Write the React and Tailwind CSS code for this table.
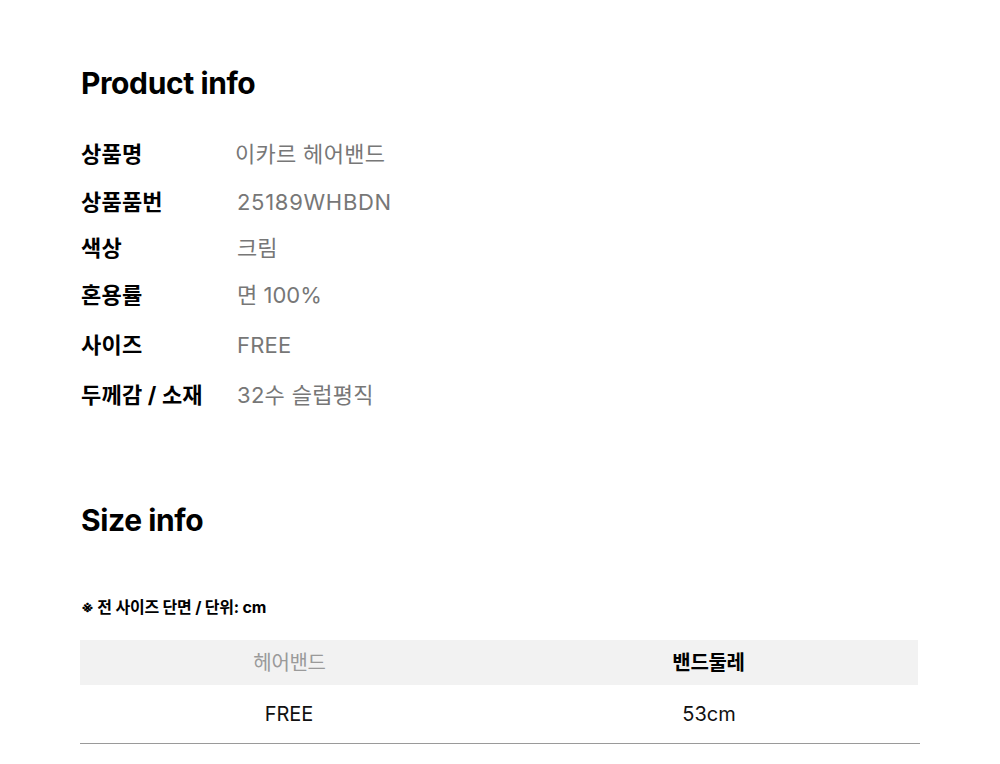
export default function App() {
  const font = { fontFamily: 'Inter, "Noto Sans CJK KR", sans-serif' };
  const rows = [
    ["상품명", "이카르 헤어밴드", "h-[48px]", "pl-0 tracking-[0.3px]"],
    ["상품품번", "25189WHBDN", "h-[48px]", "pl-[2px] tracking-[0.7px]"],
    ["색상", "크림", "h-[44px]", "pl-[2px]"],
    ["혼용률", "면 100%", "h-[50px]", "pl-[2px]"],
    ["사이즈", "FREE", "h-[50px]", "pl-[2px] tracking-[0.2px]"],
    ["두께감 / 소재", "32수 슬럽평직", "h-[50px]", "pl-[2px] tracking-[0.3px]"],
  ];
  return (
    <div className="w-[1000px] min-h-[764px] bg-white pl-[80px] pt-[65px]" style={font}>
      <h2 className="text-[30px] leading-[36px] font-bold text-black tracking-[-0.4px] pl-[1px]">Product info</h2>
      <div className="mt-[29px] flex flex-col">
        {rows.map(([k, v, h, pl]) => (
          <div key={k} className={`flex items-center ${h}`}>
            <div className="w-[155px] pl-[1px] text-[22px] font-bold text-black tracking-[0.2px]">{k}</div>
            <div className={`text-[22px] text-[#777777] ${pl}`}>{v}</div>
          </div>
        ))}
      </div>
      <h2 className="mt-[82px] text-[30px] leading-[36px] font-bold text-black tracking-[-0.4px] pl-[1px]">Size info</h2>
      <div className="mt-[59px] text-[16px] leading-[20px] font-bold text-black tracking-[-0.2px] pl-[1px]">※ 전 사이즈 단면 / 단위: cm</div>
      <div className="mt-[23px] w-[840px]">
        <div className="grid grid-cols-2 h-[45px] items-center bg-[#f2f2f2] w-[838px]">
          <div className="text-center text-[20px] text-[#9a9a9a] tracking-[-0.3px]">헤어밴드</div>
          <div className="text-center text-[20px] font-bold text-black tracking-[-0.3px]">밴드둘레</div>
        </div>
        <div className="grid grid-cols-2 h-[59px] items-center border-b border-[#9a9a9a] w-[840px]">
          <div className="text-center text-[20px] text-[#111] pr-[2px]">FREE</div>
          <div className="text-center text-[20px] text-[#111] pr-[2px]">53cm</div>
        </div>
      </div>
    </div>
  );
}
